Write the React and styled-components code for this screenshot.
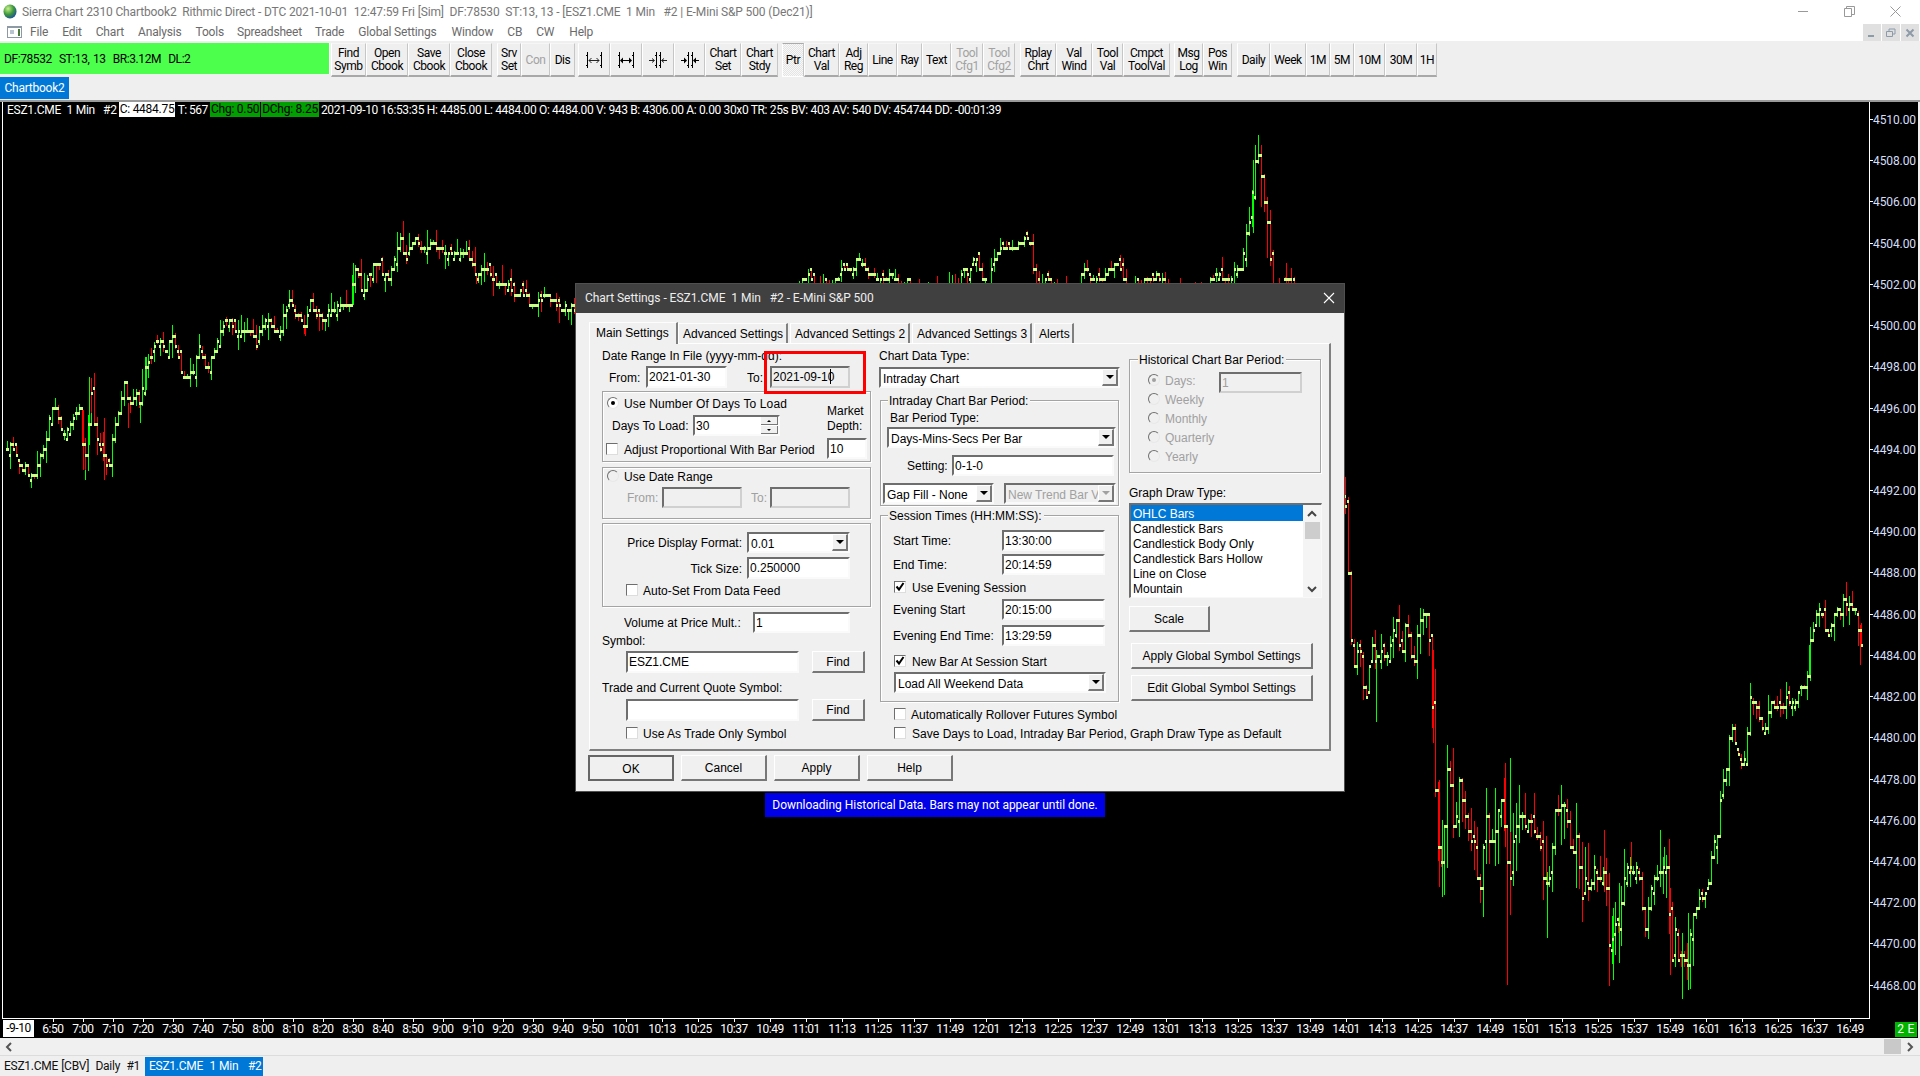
import React from "react";
import styled, { createGlobalStyle } from "styled-components";

const Global = createGlobalStyle`
  html, body { margin: 0; padding: 0; width: 1920px; height: 1076px; overflow: hidden; background: #efefef; }
  * { box-sizing: border-box; }
`;

/* ---------- chart data ---------- */
const z9 = (a) => a.map(([x, y]) => [x / 2.7, 200 + y / 3]);
const z12 = (a) => a.map(([x, y]) => [800 + x / 2.8, 120 + y / 3]);
const z10 = (a) => a.map(([x, y]) => [1340 + x / 2.7, 500 + y / 3]);
const anchors = [
  ...z9([[18,745],[25,735],[45,775],[55,810],[65,795],[85,830],[95,810],[105,775],[125,705],[135,625],[150,625],[160,670],[175,700],[190,670],[205,640],[215,625],[225,790],[235,735],[243,533],[250,640],[265,750],[275,735],[283,810],[300,770],[305,680],[320,630],[335,550],[345,610],[365,578],[375,610],[392,500],[410,455],[425,410],[445,455],[465,410],[480,470],[495,545],[510,520],[525,515],[535,425],[550,500],[565,485],[580,455],[590,410],[605,365],[625,375],[655,392],[680,392],[690,438],[700,390],[720,345],[735,392],[755,392],[765,345],[780,300],[795,345],[825,375],[835,305],[850,345],[875,360],[885,330],[910,315],[945,320],[955,190],[965,208],[975,265],[985,265],[1000,208],[1020,190],[1045,238],[1065,175],[1078,115],[1092,175],[1120,115],[1135,145],[1170,130],[1205,160],[1235,160],[1260,160],[1285,225],[1305,208],[1320,208],[1335,255],[1370,255],[1395,285],[1405,265],[1425,300],[1442,315],[1470,285],[1490,300],[1500,315],[1550,330]]),
  [620, 330], [700, 320], [780, 300],
  ...z12([[25,465],[35,490],[90,500],[105,480],[118,448],[150,448],[162,400],[180,448],[205,465],[220,490],[230,463],[240,480],[255,463],[270,480],[285,510],[300,480],[315,510],[400,520],[412,490],[440,510],[455,448],[465,465],[475,448],[490,415],[500,430],[505,480],[525,490],[537,430],[545,415],[560,385],[575,385],[590,385],[610,370],[625,355],[645,370],[650,430],[658,490],[680,500],[690,465],[698,490],[770,510],[782,480],[800,430],[810,465],[820,480],[840,480],[855,463],[875,430],[895,430],[902,480],[920,510],[965,480],[985,480],[1000,463],[1015,480],[1030,510],[1130,510],[1150,465],[1160,480],[1170,448],[1180,480],[1205,480],[1215,448],[1230,463],[1242,385],[1252,320],[1262,295],[1268,155],[1278,105],[1288,90],[1294,245],[1304,262],[1312,370],[1320,480],[1340,510],[1355,465],[1370,480],[1385,520]]),
  [1320, 400],
  ...z10([[18,48],[25,370],[40,530],[50,385],[60,560],[70,600],[85,420],[95,495],[110,450],[118,480],[130,465],[140,405],[150,340],[165,480],[178,355],[190,450],[197,515],[205,435],[215,358],[235,345],[243,465],[252,730],[260,960],[270,1130],[280,990],[292,745],[300,925],[310,1025],[318,825],[330,900],[340,960],[350,1025],[362,1030],[375,1205],[385,1070],[392,930],[405,1040],[415,1005],[425,945],[435,900],[448,1040],[456,1190],[465,1040],[475,975],[490,945],[500,975],[512,945],[525,1000],[538,1025],[550,1160],[565,1130],[572,1040],[580,945],[590,930],[605,915],[612,960],[625,1085],[635,990],[645,1100],[655,1210],[660,1115],[665,1178],[675,1160],[685,1100],[692,1132],[700,1148],[708,1100],[718,1160],[722,1285],[730,1378],[738,1270],[748,1285],[758,1225],[765,1132],[780,1085],[792,1115],[805,1100],[815,1225],[820,1300],[830,1240],[838,1178],[848,1132],[858,1132],[868,1100],[880,1100],[885,1165],[895,1392],[904,1270],[912,1392],[928,1362],[935,1425],[942,1335],[950,1255],[958,1240],[968,1192],[980,1208],[992,1162],[1000,1100],[1008,1025],[1016,1025],[1025,930],[1030,840],[1040,830],[1048,745],[1056,660],[1066,730],[1075,760],[1082,790],[1090,775],[1098,715],[1105,590],[1115,605],[1128,622],[1136,700],[1145,680],[1152,665],[1162,605],[1178,622],[1190,635],[1205,590],[1212,605],[1230,605],[1240,560],[1250,560],[1262,530],[1265,435],[1275,420],[1282,340],[1300,328],[1305,390],[1318,403],[1332,358],[1340,328],[1350,343],[1358,295],[1366,312],[1378,328],[1390,328],[1398,375],[1403,450],[1410,420]]),
];
const interp = (x) => {
  for (let i = 1; i < anchors.length; i++) {
    if (x <= anchors[i][0]) {
      const [x0, y0] = anchors[i - 1];
      const [x1, y1] = anchors[i];
      return y0 + ((y1 - y0) * (x - x0)) / Math.max(x1 - x0, 0.01);
    }
  }
  return anchors[anchors.length - 1][1];
};
const seed = (s) => () => {
  s |= 0; s = (s + 0x6d2b79f5) | 0;
  let t = Math.imul(s ^ (s >>> 15), 1 | s);
  t = (t + Math.imul(t ^ (t >>> 7), 61 | t)) ^ t;
  return ((t ^ (t >>> 14)) >>> 0) / 4294967296;
};
const TICK = 5.158;
const q = (y) => Math.round(119.3 + Math.round((y - 119.3) / TICK) * TICK);
const volAt = (x) => (x < 575 ? 13 : x < 1344 ? 9 : x < 1420 ? 20 : x < 1700 ? 30 : 14);
const buildPaths = () => {
  const r = seed(42);
  let g = "", red = "", t = "", prev = null;
  for (let i = 0; i < 619; i++) {
    const x = 7 + 3 * i;
    const c = q(interp(x) + (r() - 0.5) * TICK * 0.8);
    const o = prev === null ? c : q(prev + (r() < 0.6 ? 0 : (r() < 0.5 ? -1 : 1) * TICK));
    const v = volAt(x);
    const hi = Math.min(o, c) - Math.round(r() * r() * v * 1.6);
    const lo = Math.max(o, c) + Math.round(r() * r() * v * 1.6);
    const up = c < o || (c === o && r() < 0.55);
    const d = `M${x} ${hi}h1V${lo}h-1z`;
    if (up) g += d; else red += d;
    t += `M${x - 1} ${o - 1}h2v3h-2zM${x} ${c - 1}h2v3h-2z`;
    prev = c;
  }
  const wick = (ox, oy, sx) => ([a, b, e, col]) => {
    const d = `M${Math.round(ox + a / sx)} ${Math.round(oy + b / 3)}h1V${Math.round(oy + e / 3)}h-1z`;
    if (col) g += d; else red += d;
  };
  [[239,530,735,1],[247,535,640,0],[223,630,810,0],[230,745,840,1],[280,655,840,0],[377,610,670,1],[345,610,685,0],[393,470,570,1],[823,375,408,0],[953,190,315,1],[1285,225,252,0]].forEach(wick(0, 200, 2.7));
  [[452,1025,1455,0],[558,1115,1315,1],[923,1300,1498,1],[96,450,665,1],[250,450,730,0],[267,840,1160,0],[275,960,1190,1],[460,775,1200,1],[445,790,1040,0],[736,1225,1440,1],[752,1150,1390,1],[890,1165,1425,0],[940,1240,1470,1],[1265,435,530,1],[1403,375,495,0],[712,990,1175,0],[786,1025,1115,0],[874,1040,1100,1]].forEach(wick(1340, 500, 2.7));
  [[1283,45,120,1],[1275,75,198,1],[1291,75,262,0],[1267,120,340,1],[1258,262,340,1],[1308,232,415,0],[1300,213,275,0],[535,415,490,1],[1360,430,490,0]].forEach(wick(800, 120, 2.8));
  return { g, red, t };
};
const paths = buildPaths();

/* ---------- frame ---------- */
const UI = `Roboto, "Liberation Sans", sans-serif`;
const Page = styled.div`
  position: relative; width: 1920px; height: 1076px; overflow: hidden; background: #efefef;
  display: flex; flex-direction: column;
  font-family: "Liberation Sans", Arial, sans-serif; font-size: 12px; color: #000;
`;
const TitleBar = styled.div`
  height: 22px; background: #fff; display: flex; align-items: center; padding-left: 3px;
  font-family: ${UI}; font-size: 12px; letter-spacing: -0.14px; color: #777; white-space: pre;
`;
const TitleText = styled.span` margin-left: 5px; padding-top: 1px; `;
const WinButtons = styled.div` margin-left: auto; margin-right: 2px; display: flex; align-items: center; height: 20px; `;
const WinBtn = styled.div` width: 46px; height: 20px; display: flex; align-items: center; justify-content: center; `;
const MenuBar = styled.div`
  height: 19px; background: #fff; display: flex; align-items: center; padding-left: 7px;
  font-family: ${UI}; font-size: 12px; letter-spacing: -0.18px; color: #6a6a6a;
`;
const MenuItem = styled.span` margin-left: ${(p) => p.$ml}px; padding-top: 1px; `;
const MdiGroup = styled.div` margin-left: auto; margin-right: 1px; display: flex; gap: 1px; align-self: flex-end; height: 17px; `;
const MdiBtn = styled.div` width: 18px; height: 17px; background: #e0e0e0; display: flex; align-items: center; justify-content: center; `;
const Toolbar = styled.div` height: 61px; background: #efefef; padding-top: 2px; `;
const ToolRow = styled.div` height: 34px; display: flex; `;
const StatusBox = styled.div`
  width: 330px; height: 31px; background: #4dff4d; display: flex; align-items: center; padding-left: 4px; white-space: pre;
  font-family: ${UI}; font-size: 12px; letter-spacing: -0.42px; word-spacing: 1px; color: #000;
  border-right: 1px solid #fff;
`;
const ToolGroup = styled.div` display: flex; margin-left: ${(p) => p.$ml || 0}px; `;
const ToolBtn = styled.div`
  width: ${(p) => p.$w}px; height: 34px; display: flex; flex-direction: column; align-items: center; justify-content: center; padding-top: 1px;
  background: ${(p) => (p.$on ? "repeating-conic-gradient(#f8f8f8 0 25%, #e4e4e4 0 50%) 0 0/2px 2px" : "#efefef")};
  border-left: 1px solid #fff; border-right: 1px solid #c6c6c6; border-top: ${(p) => (p.$on ? "1px solid #aaa" : "1px solid #f6f6f6")};
  border-bottom: ${(p) => (p.$on ? "1px solid #fff" : "2px solid #a8a8a8")};
  font-family: ${UI}; font-size: 12px; line-height: 13px; letter-spacing: -0.45px;
  color: ${(p) => (p.$off ? "#a2a2a2" : "#000")};
`;
const TabRow = styled.div` height: 22px; display: flex; `;
const BookTab = styled.div`
  width: 69px; height: 22px; background: #0078d7; color: #fff; display: flex; align-items: center; justify-content: center;
  font-family: ${UI}; font-size: 12px; letter-spacing: -0.25px;
`;
const Divider = styled.div` height: 2px; background: #9a9a9a; margin-top: 1px; `;

/* ---------- chart ---------- */
const ChartRow = styled.div` height: 917px; background: #000; display: flex; padding-left: 2px; margin-right: 2px; `;
const Plot = styled.div`
  position: relative; width: 1868px; height: 917px;
  border-left: 1px solid #fff; border-right: 1px solid #fff; border-bottom: 1px solid #fff;
`;
const PlotSvg = styled.svg` display: block; width: 1866px; height: 916px; `;
const InfoLine = styled.div`
  position: absolute; left: 0; top: 0; height: 15px; display: flex; align-items: center; white-space: pre; color: #fff; padding-left: 4px;
  font-family: ${UI}; font-size: 12px; letter-spacing: -0.26px;
`;
const InfoBox = styled.span`
  height: 15px; line-height: 15px; padding: 0 1px; color: #000; background: ${(p) => p.$bg}; margin: 0 ${(p) => p.$mr ?? 0}px 0 ${(p) => p.$ml ?? 0}px;
`;
const InfoTight = styled.span` letter-spacing: -0.55px; `;
const InfoTail = styled.span` letter-spacing: -0.35px; `;
const PriceAxis = styled.div`
  flex: 1; padding-top: 10px; color: #d4def6; font-family: ${UI}; font-size: 12px; letter-spacing: -0.1px;
`;
const PriceCell = styled.div`
  position: relative; height: 41.22px; line-height: 16px; padding-left: 3px;
  &::before { content: ""; position: absolute; left: 0; top: 7px; width: 3px; height: 1px; background: #fff; }
`;
const TimeRow = styled.div`
  height: 19px; background: #000; display: flex; padding-left: 3px; margin-right: 2px; color: #fff;
  font-family: ${UI}; font-size: 12px; letter-spacing: -0.45px;
`;
const DateChip = styled.div` width: 31px; height: 17px; margin-top: 1px; margin-right: 4px; background: #fff; color: #000; text-align: center; line-height: 17px; `;
const TimeCell = styled.div`
  position: relative; width: ${(p) => p.$w}px; text-align: center; line-height: 19px; padding-top: 1px; flex: none;
  &::before { content: ""; position: absolute; left: 50%; top: 0; width: 1px; height: 3px; background: #fff; }
`;
const StateChip = styled.div` margin-left: auto; margin-right: 1px; width: 22px; height: 15px; margin-top: 3px; background: #00b400; color: #fff; text-align: center; line-height: 15px; letter-spacing: .3px; `;
const ScrollRow = styled.div` height: 18px; display: flex; align-items: center; padding-left: 5px; background: #f0f0f0; border-bottom: 1px solid #dcdcdc; `;
const ScrollThumb = styled.div` margin-left: auto; width: 17px; height: 15px; background: #c9c9c9; margin-right: 4px; `;
const ScrollEnd = styled.div` width: 15px; display: flex; justify-content: flex-start; `;
const BottomTabs = styled.div`
  margin-top: 1px; height: 19px; display: flex; padding-left: 4px; white-space: pre;
  font-family: ${UI}; font-size: 12px; letter-spacing: -0.27px; word-spacing: 0.5px; line-height: 19px; color: #111;
`;
const SheetTab = styled.div`
  width: ${(p) => p.$w}px; padding-left: ${(p) => p.$pl || 0}px;
  background: ${(p) => (p.$on ? "#0078d7" : "transparent")}; color: ${(p) => (p.$on ? "#fff" : "#111")};
`;

/* ---------- dialog ---------- */
const Dialog = styled.div`
  position: absolute; left: 575px; top: 283px; width: 770px; height: 509px; background: #f0f0f0; border: 1px solid #505050;
`;
const DlgTitle = styled.div`
  height: 29px; background: #404040; color: #eee; display: flex; align-items: center; padding: 0 0 2px 9px; white-space: pre;
  font-family: ${UI}; font-size: 12px; letter-spacing: -0.04px;
`;
const DlgClose = styled.div` margin-left: auto; margin-right: 8px; width: 14px; height: 14px; `;
const RedMark = styled.div` position: absolute; left: 188px; top: 67px; width: 102px; height: 43px; border: 3px solid #f00; `;
const TabStrip = styled.div` margin: 8px 0 0 13px; height: 22px; display: flex; align-items: flex-end; `;
const DlgTab = styled.div`
  width: ${(p) => p.$w}px; height: ${(p) => (p.$on ? 22 : 20)}px; margin-right: ${(p) => p.$gap || 0}px;
  border-top: 1px solid #fdfdfd; border-left: 1px solid #fff; border-right: 2px solid #808080;
  padding-left: ${(p) => (p.$on ? 6 : 4)}px; line-height: 21px; white-space: pre; background: #f0f0f0;
  position: relative; z-index: ${(p) => (p.$on ? 1 : 0)}; margin-bottom: ${(p) => (p.$on ? -1 : 0)}px;
`;
const TabPage = styled.div`
  margin-left: 13px; width: 742px; height: 408px; padding-left: 12px;
  border-top: 1px solid #fff; border-left: 1px solid #fff; border-right: 2px solid #808080; border-bottom: 2px solid #808080;
  display: grid; grid-template-columns: 277px 250px 193px; align-items: start;
`;
const Col = styled.div` display: flex; flex-direction: column; align-items: flex-start; `;
const Row = styled.div`
  display: flex; align-items: center; flex: none; height: ${(p) => p.$h || 14}px; margin-top: ${(p) => p.$mt || 0}px; margin-left: ${(p) => p.$ml || 0}px;
`;
const Label = styled.span`
  flex: none; white-space: pre; line-height: 14px; padding-top: ${(p) => (p.$raised ? 0 : 1)}px; width: ${(p) => (p.$w ? p.$w + "px" : "auto")}; margin-left: ${(p) => p.$ml || 0}px;
  text-align: ${(p) => p.$align || "left"}; color: ${(p) => (p.$off ? "#a0a0a0" : "#000")}; overflow: hidden;
`;
const Field = styled.div`
  position: relative; flex: none; width: ${(p) => p.$w}px; height: ${(p) => p.$h || 21}px; margin-left: ${(p) => p.$ml || 0}px; margin-top: ${(p) => p.$mt || 0}px;
  background: ${(p) => (p.$off ? "#f0f0f0" : "#fff")};
  border-top: 2px solid #6e6e6e; border-left: 2px solid #6e6e6e;
  border-right: 2px solid ${(p) => (p.$off ? "#d0d0d0" : "#fafafa")}; border-bottom: 2px solid ${(p) => (p.$off ? "#d0d0d0" : "#fafafa")};
  padding-left: 1px; line-height: 19px; white-space: pre; overflow: hidden;
  color: ${(p) => (p.$dim ? "#a0a0a0" : "#000")};
`;
const Caret = styled.span` position: absolute; left: ${(p) => p.$x}px; top: 1px; width: 1px; height: 15px; background: #000; `;
const ComboBox = styled.div`
  flex: none; display: flex; width: ${(p) => p.$w}px; height: 21px; margin-left: ${(p) => p.$ml || 0}px; margin-top: ${(p) => p.$mt || 0}px;
  background: ${(p) => (p.$off ? "#f0f0f0" : "#fff")};
  border-top: 2px solid #6e6e6e; border-left: 2px solid #6e6e6e; border-right: 2px solid #fafafa; border-bottom: 2px solid #fafafa;
  line-height: 17px; white-space: pre; padding-left: 2px; color: ${(p) => (p.$off ? "#a0a0a0" : "#000")};
`;
const ComboText = styled.span` flex: 1; overflow: hidden; padding-top: 2px; `;
const ComboArrow = styled.span`
  flex: none; width: 16px; height: 17px; background: #f0f0f0; border-top: 1px solid #fff; border-left: 1px solid #fff; border-right: 2px solid #777; border-bottom: 2px solid #777;
  display: flex; align-items: center; justify-content: center;
  &::after { content: ""; border-left: 4px solid transparent; border-right: 4px solid transparent; border-top: 4px solid ${(p) => (p.$off ? "#a0a0a0" : "#000")}; }
`;
const Spin = styled.span` position: absolute; right: 0; top: 0; width: 17px; height: 17px; display: flex; flex-direction: column; gap: 1px; `;
const SpinBtn = styled.span`
  flex: 1; background: #f0f0f0; border-bottom: 1px solid #777; border-right: 1px solid #777; display: flex; align-items: center; justify-content: center;
  &::after { content: ""; border-left: 2px solid transparent; border-right: 2px solid transparent;
    ${(p) => (p.$up ? "border-bottom: 2px solid #000;" : "border-top: 2px solid #000;")} }
`;
const Group = styled.div`
  position: relative; flex: none; width: ${(p) => p.$w}px; height: ${(p) => p.$h}px; margin-top: ${(p) => p.$mt || 0}px; margin-left: ${(p) => p.$ml || 0}px;
  border: 1px solid #a4a4a4; box-shadow: 1px 1px 0 #fff, inset 1px 1px 0 #fff;
  display: ${(p) => (p.$flex ? "flex" : "block")};
`;
const Legend = styled.span`
  position: absolute; left: ${(p) => p.$x}px; top: -7px; padding: 0 2px 0 1px; background: #f0f0f0; line-height: 15px; white-space: pre;
`;
const GroupLeft = styled.div` display: flex; flex-direction: column; flex: none; width: ${(p) => (p.$w ? p.$w + "px" : "auto")}; `;
const MarketBox = styled.div` margin-left: auto; margin-right: 3px; width: 40px; padding-top: 12px; `;
const MarketText = styled.div` height: 30px; line-height: 15px; white-space: pre; `;
const RadioDot = styled.span`
  position: relative; flex: none; width: 12px; height: 12px; border-radius: 50%; background: ${(p) => (p.$off ? "#f0f0f0" : "#fff")};
  border: 1px solid; border-color: #707070 #e8e8e8 #e8e8e8 #707070;
  &::after { content: ""; display: ${(p) => (p.$on ? "block" : "none")}; position: absolute; left: 3px; top: 3px; width: 4px; height: 4px; border-radius: 50%; background: ${(p) => (p.$off ? "#a0a0a0" : "#000")}; }
`;
const CheckBox = styled.span`
  flex: none; width: 12px; height: 12px; background: #fff; border-top: 1px solid #6e6e6e; border-left: 1px solid #6e6e6e; border-right: 1px solid #ddd; border-bottom: 1px solid #ddd;
  display: flex; align-items: center; justify-content: center;
`;
const OptionText = styled.span` margin-left: ${(p) => (p.$gap ?? 4) + 1}px; padding-top: 1px; letter-spacing: ${(p) => p.$ls || 0}px; white-space: pre; line-height: 14px; color: ${(p) => (p.$off ? "#a0a0a0" : "#000")}; `;
const PushBtn = styled.div`
  flex: none; width: ${(p) => p.$w}px; height: ${(p) => p.$h || 26}px; margin-left: ${(p) => p.$ml || 0}px; margin-top: ${(p) => p.$mt || 0}px;
  background: #f0f0f0; display: flex; align-items: center; justify-content: center; white-space: pre; padding-top: 1px;
  border-top: 1px solid #fff; border-left: 1px solid #fff; border-right: 2px solid #777; border-bottom: 2px solid #777;
  ${(p) => (p.$def ? "border: 2px solid #666;" : "")}
`;
const ListBox = styled.div`
  display: flex; width: 193px; height: 95px; margin-top: 3px; background: #fff;
  border-top: 2px solid #6e6e6e; border-left: 2px solid #6e6e6e; border-right: 1px solid #f8f8f8; border-bottom: 1px solid #f8f8f8;
`;
const ListRows = styled.div` width: 172px; flex: none; `;
const ListItem = styled.div`
  height: ${(p) => (p.$on ? 16 : 15)}px; line-height: ${(p) => (p.$on ? 18 : 17)}px; padding-left: 2px; white-space: pre;
  background: ${(p) => (p.$on ? "#0078d7" : "transparent")}; color: ${(p) => (p.$on ? "#fff" : "#000")};
`;
const ListScroll = styled.div` flex: 1; display: flex; flex-direction: column; align-items: center; background: #f4f4f4; `;
const ListArrow = styled.div` height: 17px; display: flex; align-items: center; justify-content: center; `;
const ListThumb = styled.div` width: 15px; height: 17px; background: #cdcdcd; `;
const ListGap = styled.div` flex: 1; `;
const DlgButtons = styled.div` display: flex; margin: 4px 0 0 12px; `;
const Notice = styled.div`
  position: absolute; left: 765px; top: 793px; width: 340px; height: 24px; background: #0000e6; color: #fff; text-align: center; line-height: 25px; white-space: pre;
  font-family: ${UI}; font-size: 12px; letter-spacing: -0.02px;
`;

/* ---------- small pieces ---------- */
const Check = ({ on }) => (
  <CheckBox>
    {on && (
      <svg width="10" height="10" viewBox="0 0 10 10"><path d="M1.5 4.5l2.5 3L8.5 1" fill="none" stroke="#000" strokeWidth="2" /></svg>
    )}
  </CheckBox>
);
const CheckRow = ({ ml, mt, on, gap, ls, children }) => (
  <Row $ml={ml} $mt={mt}><Check on={on} /><OptionText $gap={gap} $ls={ls}>{children}</OptionText></Row>
);
const RadioRow = ({ ml, mt, on, off, plain, ls, children }) => (
  <Row $ml={ml} $mt={mt}><RadioDot $on={on} $off={off} /><OptionText $off={off && !plain} $ls={ls}>{children}</OptionText></Row>
);
const Combo = ({ w, ml, mt, off, children }) => (
  <ComboBox $w={w} $ml={ml} $mt={mt} $off={off}><ComboText>{children}</ComboText><ComboArrow $off={off} /></ComboBox>
);
const SpanIcon = ({ kind }) => {
  const inward = kind > 1;
  const bold = kind % 2 === 1;
  const feet = (x) => `M${x} 0V16M${x - 1} 3h2M${x - 1} 13h2`;
  return (
    <svg width="18" height="17" viewBox="0 0 18 17">
      <path d={inward ? feet(7) + feet(11) : feet(2) + feet(16)} stroke="#000" fill="none" strokeWidth="1" shapeRendering="crispEdges" />
      {inward ? (
        bold ? (
          <path d="M0 8h3V5.5L6 8.5 3 11.5V9H0zM18 8h-3V5.5L12 8.5 15 11.5V9h3z" fill="#000" />
        ) : (
          <path d="M0 8.5h5M3 6.5l2.5 2-2.5 2M18 8.5h-5M15 6.5l-2.5 2 2.5 2" fill="none" stroke="#222" />
        )
      ) : bold ? (
        <path d="M6 5.5V8h6V5.5L15 8.5 12 11.5V9H6v2.5L3 8.5z" fill="#000" />
      ) : (
        <path d="M4 8.5h10M6.5 6L4 8.5 6.5 11M11.5 6L14 8.5 11.5 11" fill="none" stroke="#222" />
      )}
    </svg>
  );
};
const Chevron = ({ dir, color = "#555" }) => {
  const d = { l: "M6 1L2 5l4 4", r: "M3 1l4 4-4 4", u: "M1 7l4-4 4 4", d: "M1 3l4 4 4-4" }[dir];
  return <svg width="10" height="10" viewBox="0 0 10 10"><path d={d} fill="none" stroke={color} strokeWidth="2" /></svg>;
};

const groups = [
  { ml: 1, items: [["Find", "Symb", 35], ["Open", "Cbook", 42], ["Save", "Cbook", 42], ["Close", "Cbook", 42]] },
  { ml: 5, items: [["Srv", "Set", 24], ["Con", null, 29, true], ["Dis", null, 25]] },
  { ml: 3, items: [[0, "icon", 32], [1, "icon", 32], [2, "icon", 32], [3, "icon", 31], ["Chart", "Set", 36], ["Chart", "Stdy", 37]] },
  { ml: 4, items: [["Ptr", null, 22, false, true], ["Chart", "Val", 35], ["Adj", "Reg", 29], ["Line", null, 29], ["Ray", null, 25], ["Text", null, 29], ["Tool", "Cfg1", 32, true], ["Tool", "Cfg2", 32, true]] },
  { ml: 5, items: [["Rplay", "Chrt", 36], ["Val", "Wind", 36], ["Tool", "Val", 31], ["Cmpct", "ToolVal", 47]] },
  { ml: 4, items: [["Msg", "Log", 29], ["Pos", "Win", 29]] },
  { ml: 5, items: [["Daily", null, 33], ["Week", null, 36], ["1M", null, 24], ["5M", null, 24], ["10M", null, 31], ["30M", null, 32], ["1H", null, 20]] },
];
const menus = [["File", 7], ["Edit", 14], ["Chart", 14], ["Analysis", 14], ["Tools", 14], ["Spreadsheet", 13], ["Trade", 13], ["Global Settings", 14], ["Window", 15], ["CB", 14], ["CW", 14], ["Help", 15]];
const prices = Array.from({ length: 22 }, (_, i) => (4510 - i * 2).toFixed(2));
const times30 = ["6:50","7:00","7:10","7:20","7:30","7:40","7:50","8:00","8:10","8:20","8:30","8:40","8:50","9:00","9:10","9:20","9:30","9:40","9:50"];
const times36 = ["10:01","10:13","10:25","10:37","10:49","11:01","11:13","11:25","11:37","11:49","12:01","12:13","12:25","12:37","12:49","13:01","13:13","13:25","13:37","13:49","14:01","14:13","14:25","14:37","14:49","15:01","15:13","15:25","15:37","15:49","16:01","16:13","16:25","16:37","16:49"];

const LeftColumn = () => (
  <Col>
    <Row $mt={5}><Label $raised>Date Range In File (yyyy-mm-dd):</Label></Row>
    <Row $mt={3} $h={22}>
      <Label $ml={7} $w={37}>From:</Label>
      <Field $w={81} $h={22}>2021-01-30</Field>
      <Label $ml={20} $w={23}>To:</Label>
      <Field $w={80} $h={22} $off>2021-09-10<Caret $x={58} /></Field>
    </Row>
    <Group $w={269} $h={71} $mt={3} $flex>
      <GroupLeft>
        <RadioRow ml={4} mt={4} on ls={0.12}>Use Number Of Days To Load</RadioRow>
        <Row $mt={5} $h={21}>
          <Label $ml={9} $w={81}>Days To Load:</Label>
          <Field $w={87}>30<Spin><SpinBtn $up /><SpinBtn /></Spin></Field>
        </Row>
        <CheckRow ml={3} mt={6} gap={5} ls={0.06}>Adjust Proportional With Bar Period</CheckRow>
      </GroupLeft>
      <MarketBox>
        <MarketText>{"Market\nDepth:"}</MarketText>
        <Field $w={40} $mt={4}>10</Field>
      </MarketBox>
    </Group>
    <Group $w={269} $h={52} $mt={5}>
      <RadioRow ml={4} mt={1} off plain>Use Date Range</RadioRow>
      <Row $mt={4} $h={21}>
        <Label $ml={24} $w={35} $off>From:</Label>
        <Field $w={80} $off />
        <Label $ml={9} $w={19} $off>To:</Label>
        <Field $w={80} $off />
      </Row>
    </Group>
    <Group $w={269} $h={84} $mt={4}>
      <Row $mt={8} $h={21}>
        <Label $w={139} $align="right" $raised>Price Display Format:</Label>
        <Combo w={103} ml={5}>0.01</Combo>
      </Row>
      <Row $mt={4} $h={22}>
        <Label $w={139} $align="right">Tick Size:</Label>
        <Field $w={103} $h={22} $ml={5}>0.250000</Field>
      </Row>
      <CheckRow ml={23} mt={4}>Auto-Set From Data Feed</CheckRow>
    </Group>
    <Row $mt={5} $h={21}>
      <Label $ml={22} $w={129}>Volume at Price Mult.:</Label>
      <Field $w={97}>1</Field>
    </Row>
    <Row $mt={1}><Label $raised>Symbol:</Label></Row>
    <Row $mt={3} $h={22}>
      <Field $w={173} $h={22} $ml={24}>ESZ1.CME</Field>
      <PushBtn $w={53} $h={22} $ml={13}>Find</PushBtn>
    </Row>
    <Row $mt={8}><Label $raised>Trade and Current Quote Symbol:</Label></Row>
    <Row $mt={4} $h={22}>
      <Field $w={173} $h={22} $ml={24} />
      <PushBtn $w={53} $h={22} $ml={13}>Find</PushBtn>
    </Row>
    <CheckRow ml={24} mt={5}>Use As Trade Only Symbol</CheckRow>
  </Col>
);

const SessionRow = ({ mt, label, value, raised }) => (
  <Row $mt={mt} $h={21}>
    <Label $ml={12} $w={109} $raised={raised}>{label}</Label>
    <Field $w={103}>{value}</Field>
  </Row>
);
const MiddleColumn = () => (
  <Col>
    <Row $mt={5}><Label $raised>Chart Data Type:</Label></Row>
    <Combo w={241} mt={4}>Intraday Chart</Combo>
    <Group $w={239} $h={106} $mt={12} $ml={1}>
      <Legend $x={7}>Intraday Chart Bar Period:</Legend>
      <Row $mt={10}><Label $ml={9} $raised>Bar Period Type:</Label></Row>
      <Combo w={229} ml={6} mt={2}>Days-Mins-Secs Per Bar</Combo>
      <Row $mt={7} $h={21}>
        <Label $ml={26} $w={45}>Setting:</Label>
        <Field $w={162}>0-1-0</Field>
      </Row>
      <Row $mt={7} $h={21}>
        <Combo w={111} ml={2}>Gap Fill - None</Combo>
        <Combo w={112} ml={10} off>New Trend Bar V</Combo>
      </Row>
    </Group>
    <Group $w={239} $h={187} $mt={9} $ml={1}>
      <Legend $x={7}>Session Times (HH:MM:SS):</Legend>
      <SessionRow mt={14} label="Start Time:" value="13:30:00" raised />
      <SessionRow mt={3} label="End Time:" value="20:14:59" raised />
      <CheckRow ml={13} mt={5} on gap={5}>Use Evening Session</CheckRow>
      <SessionRow mt={5} label="Evening Start" value="20:15:00" />
      <SessionRow mt={5} label="Evening End Time:" value="13:29:59" />
      <CheckRow ml={13} mt={8} on gap={5}>New Bar At Session Start</CheckRow>
      <Combo w={212} ml={13} mt={4}>Load All Weekend Data</Combo>
    </Group>
    <CheckRow ml={15} mt={5} gap={4}>Automatically Rollover Futures Symbol</CheckRow>
    <CheckRow ml={15} mt={5} gap={5}>Save Days to Load, Intraday Bar Period, Graph Draw Type as Default</CheckRow>
  </Col>
);
const RightColumn = () => (
  <Col>
    <Group $w={192} $h={114} $mt={15} $flex>
      <Legend $x={8}>Historical Chart Bar Period:</Legend>
      <GroupLeft $w={89}>
        <RadioRow ml={18} mt={13} on off>Days:</RadioRow>
        <RadioRow ml={18} mt={5} off>Weekly</RadioRow>
        <RadioRow ml={18} mt={5} off>Monthly</RadioRow>
        <RadioRow ml={18} mt={5} off>Quarterly</RadioRow>
        <RadioRow ml={18} mt={5} off>Yearly</RadioRow>
      </GroupLeft>
      <Field $w={83} $off $dim $mt={12}>1</Field>
    </Group>
    <Row $mt={13}><Label $raised>Graph Draw Type:</Label></Row>
    <ListBox>
      <ListRows>
        <ListItem $on>OHLC Bars</ListItem>
        <ListItem>Candlestick Bars</ListItem>
        <ListItem>Candlestick Body Only</ListItem>
        <ListItem>Candlestick Bars Hollow</ListItem>
        <ListItem>Line on Close</ListItem>
        <ListItem>Mountain</ListItem>
      </ListRows>
      <ListScroll>
        <ListArrow><Chevron dir="u" color="#444" /></ListArrow>
        <ListThumb />
        <ListGap />
        <ListArrow><Chevron dir="d" color="#444" /></ListArrow>
      </ListScroll>
    </ListBox>
    <PushBtn $w={81} $mt={8}>Scale</PushBtn>
    <PushBtn $w={182} $ml={2} $mt={11}>Apply Global Symbol Settings</PushBtn>
    <PushBtn $w={182} $ml={2} $mt={6}>Edit Global Symbol Settings</PushBtn>
  </Col>
);

export default function App() {
  return (
    <Page>
      <Global />
      <TitleBar>
        <svg width="14" height="15" viewBox="0 0 14 15">
          <defs>
            <radialGradient id="gl" cx="35%" cy="30%" r="75%">
              <stop offset="0" stopColor="#c8f08c" /><stop offset=".55" stopColor="#3f9a3a" /><stop offset="1" stopColor="#1b4f9a" />
            </radialGradient>
          </defs>
          <ellipse cx="7" cy="7.5" rx="6.5" ry="7" fill="url(#gl)" />
        </svg>
        <TitleText>Sierra Chart 2310 Chartbook2  Rithmic Direct - DTC 2021-10-01  12:47:59 Fri [Sim]  DF:78530  ST:13, 13 - [ESZ1.CME  1 Min   #2 | E-Mini S&amp;P 500 (Dec21)]</TitleText>
        <WinButtons>
          <WinBtn><svg width="11" height="11"><path d="M0 5.5h10" stroke="#999" /></svg></WinBtn>
          <WinBtn><svg width="11" height="11"><path d="M.5 2.5h7v8h-7zM2.5 2.5v-2h8v8h-3" fill="none" stroke="#999" /></svg></WinBtn>
          <WinBtn><svg width="11" height="11"><path d="M.5.5l10 10M10.5.5l-10 10" stroke="#999" /></svg></WinBtn>
        </WinButtons>
      </TitleBar>
      <MenuBar>
        <svg width="16" height="12" viewBox="0 0 16 12">
          <path d="M0 0h15v12H0z" fill="#8d9aa5" /><path d="M1 2h13v9H1z" fill="#fff" /><path d="M11 3h2v7h-2z" fill="#4a7a3a" /><path d="M3 4h4v4H3z" fill="#b8c4d0" />
        </svg>
        {menus.map(([m, ml]) => <MenuItem key={m} $ml={ml}>{m}</MenuItem>)}
        <MdiGroup>
          <MdiBtn><svg width="10" height="10"><path d="M1 7h6v2H1z" fill="#8d9aa8" /></svg></MdiBtn>
          <MdiBtn><svg width="10" height="10"><path d="M.5 3.5h6v5h-6zM3 3V1h6v5H7" fill="none" stroke="#8d9aa8" /></svg></MdiBtn>
          <MdiBtn><svg width="10" height="10"><path d="M1.5 1.5l7 7M8.5 1.5l-7 7" stroke="#8d9aa8" strokeWidth="2" /></svg></MdiBtn>
        </MdiGroup>
      </MenuBar>
      <Toolbar>
        <ToolRow>
          <StatusBox>DF:78532  ST:13, 13  BR:3.12M  DL:2</StatusBox>
          {groups.map((g, gi) => (
            <ToolGroup key={gi} $ml={g.ml}>
              {g.items.map(([a, b, w, off, on], i) => (
                <ToolBtn key={i} $w={w} $off={off} $on={on}>
                  {b === "icon" ? <SpanIcon kind={a} /> : (<><span>{a}</span>{b && <span>{b}</span>}</>)}
                </ToolBtn>
              ))}
            </ToolGroup>
          ))}
        </ToolRow>
        <TabRow><BookTab>Chartbook2</BookTab></TabRow>
        <Divider />
      </Toolbar>
      <ChartRow>
        <Plot>
          <PlotSvg viewBox="3 102 1866 916" shapeRendering="crispEdges">
            <path d={paths.g} fill="#00ff00" />
            <path d={paths.red} fill="#ff0000" />
            <path d={paths.t} fill="#ccff88" />
          </PlotSvg>
          <InfoLine>
            {"ESZ1.CME  1 Min   #2"}
            <InfoBox $bg="#fff" $ml={2}>C: 4484.75</InfoBox>
            <InfoTight>{" T: 567 "}</InfoTight>
            <InfoBox $bg="#00a000">Chg: 0.50</InfoBox>
            <InfoBox $bg="#00a000" $ml={1} $mr={2}>DChg: 8.25</InfoBox>
            <InfoTail>2021-09-10 16:53:35 H: 4485.00 L: 4484.00 O: 4484.00 V: 943 B: 4306.00 A: 0.00 30x0 TR: 25s BV: 403 AV: 540 DV: 454744 DD: -00:01:39</InfoTail>
          </InfoLine>
        </Plot>
        <PriceAxis>
          {prices.map((p) => <PriceCell key={p}>{p}</PriceCell>)}
        </PriceAxis>
      </ChartRow>
      <TimeRow>
        <DateChip>-9-10</DateChip>
        {times30.map((t) => <TimeCell key={t} $w={30}>{t}</TimeCell>)}
        {times36.map((t) => <TimeCell key={t} $w={36}>{t}</TimeCell>)}
        <StateChip>2 E</StateChip>
      </TimeRow>
      <ScrollRow>
        <Chevron dir="l" />
        <ScrollThumb />
        <ScrollEnd><Chevron dir="r" /></ScrollEnd>
      </ScrollRow>
      <BottomTabs>
        <SheetTab $w={141}>ESZ1.CME [CBV]  Daily  #1</SheetTab>
        <SheetTab $w={118} $on $pl={4}>ESZ1.CME  1 Min   #2</SheetTab>
      </BottomTabs>
      <Dialog>
        <DlgTitle>
          Chart Settings - ESZ1.CME  1 Min   #2 - E-Mini S&amp;P 500
          <DlgClose><svg width="14" height="14"><path d="M2 2l10 10M12 2L2 12" stroke="#fff" strokeWidth="1.1" /></svg></DlgClose>
        </DlgTitle>
        <TabStrip>
          <DlgTab $w={89} $on>Main Settings</DlgTab>
          <DlgTab $w={110} $gap={2}>Advanced Settings</DlgTab>
          <DlgTab $w={120} $gap={2}>Advanced Settings 2</DlgTab>
          <DlgTab $w={120} $gap={2}>Advanced Settings 3</DlgTab>
          <DlgTab $w={40}>Alerts</DlgTab>
        </TabStrip>
        <TabPage>
          <LeftColumn />
          <MiddleColumn />
          <RightColumn />
        </TabPage>
        <DlgButtons>
          <PushBtn $w={86} $def>OK</PushBtn>
          <PushBtn $w={86} $ml={7}>Cancel</PushBtn>
          <PushBtn $w={86} $ml={7}>Apply</PushBtn>
          <PushBtn $w={86} $ml={7}>Help</PushBtn>
        </DlgButtons>
        <RedMark />
      </Dialog>
      <Notice>Downloading Historical Data. Bars may not appear until done.</Notice>
    </Page>
  );
}
